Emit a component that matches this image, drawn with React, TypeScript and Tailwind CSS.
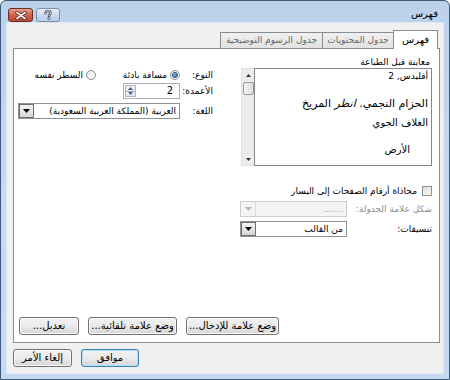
import React from "react";

const btn =
  "h-[18px] flex items-center justify-center rounded-[3px] border border-[#707070] bg-gradient-to-b from-[#f2f2f2] via-[#ebebeb] to-[#d5d5d5] shadow-[inset_0_0_0_1px_#fbfbfb] text-[10px] leading-none text-black";

function Arrow({ color = "#000" }: { color?: string }) {
  return (
    <svg width="7" height="4" viewBox="0 0 7 4">
      <path d="M0 0h7L3.5 4z" fill={color} />
    </svg>
  );
}

function Combo({
  text,
  className,
  disabled,
}: {
  text: string;
  className: string;
  disabled?: boolean;
}) {
  return (
    <div
      className={
        "h-[16px] flex items-stretch border " +
        (disabled ? "border-[#cdcdcd] bg-[#f4f4f4] " : "border-[#8e9198] bg-white ") +
        className
      }
    >
      <div
        className={
          "flex-1 flex items-center pr-[3px] text-[9px] leading-none " +
          (disabled ? "text-[#9a9a9a]" : "text-black")
        }
      >
        {text}
      </div>
      <div
        className={
          "w-[15px] flex items-center justify-center " +
          (disabled
            ? "border-r border-[#dcdcdc] bg-[#f4f4f4]"
            : "bg-gradient-to-b from-[#f2f2f2] to-[#d8d8d8] border border-[#707070]")
        }
      >
        <Arrow color={disabled ? "#b5b5b5" : "#000"} />
      </div>
    </div>
  );
}

function Radio({ checked }: { checked?: boolean }) {
  return (
    <div className="w-[10px] h-[10px] shrink-0 rounded-full border border-[#8e8f8f] bg-gradient-to-br from-[#e4e4e4] to-[#ffffff] flex items-center justify-center">
      {checked && (
        <div className="w-[6px] h-[6px] rounded-full bg-gradient-to-br from-[#9adcfb] to-[#1d6fa6] border border-[#1b4f77]" />
      )}
    </div>
  );
}

export default function App() {
  return (
    <div className="w-[450px] h-[380px] bg-white">
      <div
        dir="rtl"
        className="w-[450px] h-[380px] flex flex-col border border-[#3b5876] rounded-t-[6px] bg-gradient-to-b from-[#bcd2ea] via-[#c5d9ef] to-[#c6d9ee] font-['DejaVu_Sans',sans-serif] text-[11px] text-black overflow-hidden whitespace-nowrap"
      >
        {/* title bar */}
        <div className="h-[22px] flex items-start justify-between pr-[11px] pl-[7px]">
          <span className="mt-[8px] text-[10px] leading-none">فهرس</span>
          <div dir="ltr" className="flex gap-[3px] mt-[7px]">
            <div className="w-[25px] h-[14px] rounded-[3px] border border-[#6a2c25] bg-gradient-to-b from-[#e4a193] via-[#d0624c] to-[#c0472f] flex items-center justify-center">
              <svg width="12" height="9" viewBox="0 0 12 9">
                <path d="M2 1.5l8 6M10 1.5l-8 6" stroke="#4a1a14" strokeWidth="3.2" strokeLinecap="round" />
                <path d="M2 1.5l8 6M10 1.5l-8 6" stroke="#ffffff" strokeWidth="1.8" strokeLinecap="round" />
              </svg>
            </div>
            <div className="w-[24px] h-[14px] rounded-[3px] border border-[#7a8fae] bg-gradient-to-b from-[#e6eef8] via-[#ccdbee] to-[#b9cde6] flex items-center justify-center">
              <svg width="8" height="10" viewBox="0 0 8 10">
                <path
                  d="M1.5 3.2C1.5 1.8 2.6 1 4 1s2.5.8 2.5 2.1c0 1.4-1.6 1.6-1.6 2.9"
                  fill="none"
                  stroke="#3d4a5a"
                  strokeWidth="2.4"
                  strokeLinecap="round"
                />
                <path
                  d="M1.5 3.2C1.5 1.8 2.6 1 4 1s2.5.8 2.5 2.1c0 1.4-1.6 1.6-1.6 2.9"
                  fill="none"
                  stroke="#f2f2f2"
                  strokeWidth="1"
                  strokeLinecap="round"
                />
                <circle cx="4.9" cy="8.4" r="1.2" fill="#f2f2f2" stroke="#3d4a5a" strokeWidth="0.8" />
              </svg>
            </div>
          </div>
        </div>

        {/* client area */}
        <div className="h-[350px] mx-[6px] bg-[#f0f0f0] flex flex-col pt-[7px] pl-[6px] pr-[3px] shadow-[0_0_0_1px_#dde8f4]">
          {/* tabs */}
          <div className="h-[18px] flex items-end pr-[2px]">
            <div className="relative z-10 w-[45px] h-[19px] -mb-[1px] bg-white border-t border-x border-[#898c95] flex items-center justify-center text-[10px] leading-none">
              فهرس
            </div>
            <div className="w-[71px] h-[16px] border-t border-l border-[#898c95] bg-gradient-to-b from-[#f0f0f0] to-[#e2e2e2] flex items-center justify-center text-[9px] leading-none text-[#666]">
              جدول المحتويات
            </div>
            <div className="w-[102px] h-[16px] border-t border-l border-[#898c95] bg-gradient-to-b from-[#f0f0f0] to-[#e2e2e2] flex items-center justify-center text-[9px] leading-none text-[#666]">
              جدول الرسوم التوضيحية
            </div>
          </div>

          {/* panel */}
          <div className="h-[295px] bg-white border border-[#898c95] flex flex-col pt-[7px] pl-[4px] pr-[7px] pb-[7px]">
            <div className="flex items-start gap-[28px]">
              {/* right column: preview */}
              <div className="w-[191px] flex flex-col">
                <div className="h-[12px] leading-[12px] pr-[2px] text-[9px]">معاينة قبل الطباعة</div>
                <div className="h-[98px] flex">
                  <div className="flex-1 border border-[#828790] bg-white pr-[3px] flex flex-col items-start pt-[1px]">
                    <div className="text-[9px] leading-[12px]">أقليدس, 2</div>
                    <div className="mt-[15px] text-[11px] leading-[14px]">
                      الحزام النجمي. <span className="italic">انظر</span> المريخ
                    </div>
                    <div className="mt-[5px] text-[10px] leading-[14px]">الغلاف الجوي</div>
                    <div className="mt-[13px] mr-[18px] text-[10px] leading-[14px]">الأرض</div>
                  </div>
                  <div className="w-[13px] bg-[#ececec] border-y border-l border-[#e2e2e2] flex flex-col items-center">
                    <div className="h-[12px] flex items-center justify-center">
                      <svg width="5" height="3" viewBox="0 0 5 3">
                        <path d="M0 3h5L2.5 0z" fill="#333" />
                      </svg>
                    </div>
                    <div className="w-[11px] h-[13px] mt-[1px] rounded-[2px] border border-[#9a9a9a] bg-gradient-to-r from-[#f4f4f4] to-[#dcdcdc]" />
                    <div className="flex-1" />
                    <div className="h-[12px] flex items-center justify-center">
                      <svg width="5" height="3" viewBox="0 0 5 3">
                        <path d="M0 0h5L2.5 3z" fill="#333" />
                      </svg>
                    </div>
                  </div>
                </div>
              </div>

              {/* left column */}
              <div className="w-[195px] mt-[12px] flex flex-col">
                <div className="h-[14px] flex items-center">
                  <div className="w-[33px] text-[9px] leading-none">النوع:</div>
                  <div className="w-[84px] flex items-center gap-[3px]">
                    <Radio checked />
                    <span className="text-[9px] leading-none">مسافة بادئة</span>
                  </div>
                  <div className="flex items-center gap-[3px]">
                    <Radio />
                    <span className="text-[9px] leading-none">السطر نفسه</span>
                  </div>
                </div>
                <div className="h-[16px] mt-[1px] flex items-center">
                  <div className="w-[33px] text-[9px] leading-none">الأعمدة:</div>
                  <div className="w-[57px] h-[16px] border border-[#abadb3] bg-white flex items-stretch">
                    <div className="flex-1 flex items-center pr-[6px] text-[10px] leading-none">2</div>
                    <div className="w-[11px] flex flex-col my-[1px] ml-[1px]">
                      <div className="flex-1 border border-[#a9b7c9] bg-gradient-to-b from-[#f3f6fa] to-[#dce5ef] flex items-center justify-center">
                        <svg width="5" height="3" viewBox="0 0 5 3">
                          <path d="M0 3h5L2.5 0z" fill="#4d6185" />
                        </svg>
                      </div>
                      <div className="flex-1 border border-t-0 border-[#a9b7c9] bg-gradient-to-b from-[#f3f6fa] to-[#dce5ef] flex items-center justify-center">
                        <svg width="5" height="3" viewBox="0 0 5 3">
                          <path d="M0 0h5L2.5 3z" fill="#4d6185" />
                        </svg>
                      </div>
                    </div>
                  </div>
                </div>
                <div className="h-[16px] mt-[4px] flex items-center">
                  <div className="w-[33px] text-[9px] leading-none">اللغة:</div>
                  <Combo className="w-[162px]" text="العربية (المملكة العربية السعودية)" />
                </div>
              </div>
            </div>

            {/* lower block */}
            <div className="w-[192px] mt-[19px] flex flex-col">
              <div className="h-[12px] flex items-center gap-[5px]">
                <div className="w-[10px] h-[10px] border border-[#8e8f8f] bg-gradient-to-br from-[#dedede] to-[#fbfbfb]" />
                <span className="text-[9px] leading-none">محاذاة أرقام الصفحات إلى اليسار</span>
              </div>
              <div className="h-[16px] mt-[4px] flex items-center">
                <div className="flex-1 text-[9px] leading-none text-[#8d8d8d]">شكل علامة الجدولة:</div>
                <Combo className="w-[107px]" text="......." disabled />
              </div>
              <div className="h-[16px] mt-[4px] flex items-center">
                <div className="flex-1 text-[9px] leading-none">تنسيقات:</div>
                <Combo className="w-[107px]" text="من القالب" />
              </div>
            </div>

            <div className="flex-1" />

            {/* panel buttons */}
            <div className="flex justify-end gap-[8px] pl-[1px]">
              <div className={btn + " w-[93px]"}>وضع علامة للإدخال...</div>
              <div className={btn + " w-[89px] mr-[1px]"}>وضع علامة تلقائية...</div>
              <div className={btn + " w-[60px] mr-[1px]"}>تعديل...</div>
            </div>
          </div>

          {/* dialog buttons */}
          <div className="mt-[6px] flex justify-end gap-[9px]">
            <div className="w-[58px] h-[18px] flex items-center justify-center rounded-[3px] border border-[#3c7fb1] bg-gradient-to-b from-[#f2f2f2] via-[#ebebeb] to-[#d5d5d5] shadow-[inset_0_0_0_1px_#b2e2fa] text-[10px] leading-none">
              موافق
            </div>
            <div className={btn + " w-[59px]"}>إلغاء الأمر</div>
          </div>
        </div>
      </div>
    </div>
  );
}
